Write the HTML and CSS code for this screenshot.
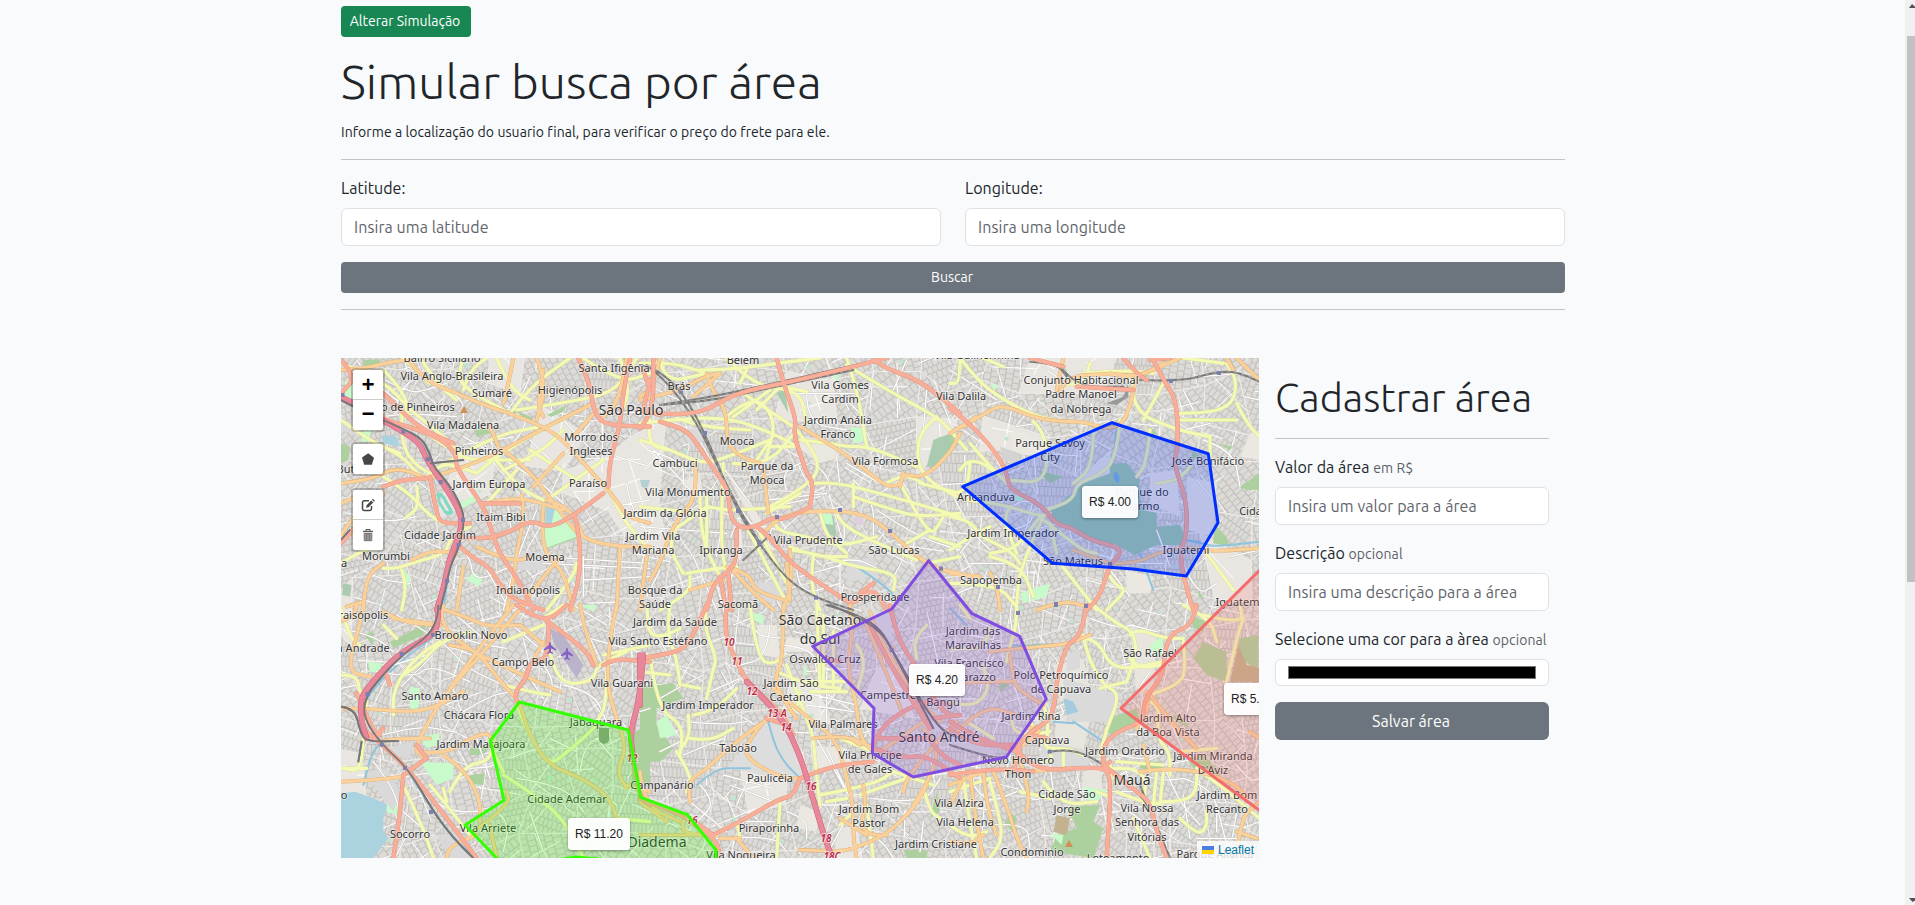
FILE: index.html
```html
<!DOCTYPE html>
<html lang="pt-BR">
<head>
<meta charset="utf-8">
<title>Simular busca por área</title>
<link rel="stylesheet" href="styles.css">
</head>
<body>
<div class="page">
<main class="container">
  <button class="btn btn-sm btn-success">Alterar Simulação</button>
  <h1 class="title">Simular busca por área</h1>
  <p class="lead">Informe a localização do usuario final, para verificar o preço do frete para ele.</p>
  <hr>
  <form class="search">
    <div class="search-row">
      <div class="field"><label>Latitude:</label><input class="control" placeholder="Insira uma latitude"></div>
      <div class="field"><label>Longitude:</label><input class="control" placeholder="Insira uma longitude"></div>
    </div>
    <button type="button" class="btn btn-sm btn-secondary">Buscar</button>
  </form>
  <hr>
  <div class="workspace">
    <section class="map">
      <svg class="canvas" width="918" height="500" viewBox="0 0 918 500">
        <g id="base"></g>
        <g id="roads"></g>
        <g class="markers">
          <g transform="translate(209,290)"><path d="M0-6c1 0 1 1 1 3l5 4v1.500l-5-2v3l2 1.500v1L0 5l-3 1v-1l2-1.500v-3l-5 2V1l5-4c0-2 0-3 1-3z"/></g>
          <g transform="translate(226,296)"><path d="M0-6c1 0 1 1 1 3l5 4v1.500l-5-2v3l2 1.500v1L0 5l-3 1v-1l2-1.500v-3l-5 2V1l5-4c0-2 0-3 1-3z"/></g>
          <path class="peak" d="M123 48l-4 7h8zM728 482l-4 7h8z"/>
          <path fill="#8b9a86" d="M258 370h10v13q-5 6-10 0z"/>
        </g>
        <g class="labels">
          <text x="101" y="4">Bairro Siciliano</text><text x="111" y="22">Vila Anglo-Brasileira</text><text x="151" y="39">Sumaré</text>
          <text x="229" y="36">Higienópolis</text><text x="273" y="14">Santa Ifigênia</text><text x="70" y="53">Alto de Pinheiros</text>
          <text x="122" y="71">Vila Madalena</text><text x="138" y="97">Pinheiros</text><text x="250" y="83">Morro dos</text><text x="250" y="97">Ingleses</text>
          <text x="148" y="130">Jardim Europa</text><text x="247" y="129">Paraíso</text><text x="16" y="115">Butantã</text><text x="160" y="163">Itaim Bibi</text>
          <text x="99" y="181">Cidade Jardim</text><text x="45" y="202">Morumbi</text><text x="204" y="203">Moema</text><text x="187" y="236">Indianópolis</text>
          <text x="3" y="209">a</text><text class="big" x="290" y="57">São Paulo</text>
          <text x="338" y="32">Brás</text><text x="402" y="6">Belém</text><text x="396" y="87">Mooca</text><text x="334" y="109">Cambuci</text>
          <text x="426" y="112">Parque da</text><text x="426" y="126">Mooca</text><text x="347" y="138">Vila Monumento</text><text x="324" y="159">Jardim da Glória</text>
          <text x="312" y="182">Jardim Vila</text><text x="312" y="196">Mariana</text><text x="380" y="196">Ipiranga</text><text x="467" y="186">Vila Prudente</text>
          <text x="499" y="31">Vila Gomes</text><text x="499" y="45">Cardim</text><text x="497" y="66">Jardim Anália</text><text x="497" y="80">Franco</text>
          <text x="544" y="107">Vila Formosa</text><text x="553" y="196">São Lucas</text><text x="534" y="243">Prosperidade</text>
          <text x="314" y="236">Bosque da</text><text x="314" y="250">Saúde</text><text x="397" y="250">Sacomã</text><text x="620" y="42">Vila Dalila</text>
          <text x="636" y="1">Vila Guilhermina</text><text x="740" y="26">Conjunto Habitacional</text><text x="740" y="40">Padre Manoel</text><text x="740" y="55">da Nobrega</text>
          <text x="709" y="89">Parque Savoy</text><text x="709" y="103">City</text><text x="867" y="107">José Bonifácio</text><text x="645" y="143">Aricanduva</text>
          <text x="801" y="138">Parque do</text><text x="801" y="152">Carmo</text><text x="672" y="179">Jardim Imperador</text><text x="732" y="207">São Mateus</text>
          <text x="845" y="196">Iguatemi</text><text x="650" y="226">Sapopemba</text><text x="916" y="157">Cidade</text><text x="898" y="248">Iguatemi</text>
          <text x="16" y="261">Paraisópolis</text><text x="16" y="294">Vila Andrade</text><text x="130" y="281">Brooklin Novo</text><text x="182" y="308">Campo Belo</text>
          <text x="94" y="342">Santo Amaro</text><text x="138" y="361">Chácara Flora</text><text x="140" y="390">Jardim Marajoara</text><text x="255" y="368">Jabaquara</text>
          <text x="226" y="445">Cidade Ademar</text><text x="147" y="474">Vila Arriete</text><text x="69" y="480">Socorro</text><text x="3" y="441">o</text>
          <text x="334" y="268">Jardim da Saúde</text><text x="317" y="287">Vila Santo Estéfano</text><text x="281" y="329">Vila Guarani</text>
          <text class="big" x="479" y="267">São Caetano</text><text class="big" x="479" y="286">do Sul</text><text x="484" y="305">Oswaldo Cruz</text>
          <text x="450" y="329">Jardim São</text><text x="450" y="343">Caetano</text><text x="367" y="351">Jardim Imperador</text><text x="502" y="370">Vila Palmares</text>
          <text x="397" y="394">Taboão</text><text x="429" y="424">Paulicéia</text><text x="321" y="431">Campanário</text><text x="529" y="401">Vila Príncipe</text><text x="529" y="415">de Gales</text>
          <text x="428" y="474">Piraporinha</text><text x="400" y="501">Vila Nogueira</text><text x="528" y="455">Jardim Bom</text><text x="528" y="469">Pastor</text>
          <text class="big" x="316" y="489">Diadema</text><text x="547" y="341">Campestre</text><text x="602" y="348">Bangú</text><text class="big" x="598" y="384">Santo André</text>
          <text x="632" y="277">Jardim das</text><text x="632" y="291">Maravilhas</text><text x="628" y="309">Vila Francisco</text><text x="628" y="323">Matarazzo</text>
          <text x="720" y="321">Polo Petroquímico</text><text x="720" y="335">de Capuava</text><text x="690" y="362">Jardim Rina</text><text x="706" y="386">Capuava</text>
          <text x="677" y="406">Novo Homero</text><text x="677" y="420">Thon</text><text x="784" y="397">Jardim Oratório</text><text class="big" x="791" y="427">Mauá</text>
          <text x="809" y="299">São Rafael</text><text x="827" y="364">Jardim Alto</text><text x="827" y="378">da Boa Vista</text><text x="872" y="402">Jardim Miranda</text><text x="872" y="416">D'Aviz</text>
          <text x="886" y="441">Jardim Bom</text><text x="886" y="455">Recanto</text><text x="726" y="440">Cidade São</text><text x="726" y="455">Jorge</text>
          <text x="806" y="454">Vila Nossa</text><text x="806" y="468">Senhora das</text><text x="806" y="483">Vitórias</text><text x="618" y="449">Vila Alzira</text>
          <text x="624" y="468">Vila Helena</text><text x="595" y="490">Jardim Cristiane</text><text x="691" y="498">Condominio</text><text x="777" y="504">Loteamento</text><text x="874" y="500">Parque Aliança</text>
        </g>
        <g class="exits">
          <text x="388" y="288">10</text><text x="396" y="307">11</text><text x="411" y="337">12</text><text x="436" y="359">13 A</text><text x="445" y="373">14</text>
          <text x="470" y="432">16</text><text x="485" y="484">18</text><text x="491" y="502">18C</text><text x="291" y="404">12</text><text x="351" y="466">16</text>
        </g>
        <g class="areas">
          <path class="area-blue" d="M621.700 128.700L771 64.700l96.300 31 9.700 69-31.700 53.300-53-7-80.600-5.700z"/>
          <path class="area-purple" d="M587.700 202.700l43 52.600 48 23 26.600 62.700-40 58-93 20-41-23.700 1.700-45-61.300-62 79-37.300z"/>
          <path class="area-green" d="M178.300 344l109 28 12.400 67.300 46.600 17.400L375 492v20l-140-13-70 11-41-43 39-24.700-13.700-59.600z"/>
          <path class="area-red" d="M930 201L780 350.300 930 461z"/>
        </g>
      </svg>
      <div class="tip tip-blue">R$ 4.00</div>
      <div class="tip tip-purple">R$ 4.20</div>
      <div class="tip tip-green">R$ 11.20</div>
      <div class="tip tip-red">R$ 5.00</div>
      <div class="controls">
        <div class="bar"><a class="zoom plus">+</a><a class="zoom minus">−</a></div>
        <div class="bar"><a><svg width="14" height="14" viewBox="0 0 14 14"><path fill="#464646" d="M7.200 1.200L13 5.800 10.800 12.700H3.200L1 5.500z"/></svg></a></div>
        <div class="bar bar-edit">
          <a><svg width="14" height="14" viewBox="0 0 14 14"><path fill="none" stroke="#464646" stroke-width="1.500" d="M8 2.800H3.200Q1.500 2.800 1.500 4.500v6.200q0 1.700 1.700 1.700h5.600q1.700 0 1.700-1.700V8"/><path fill="#464646" d="M5 9.800l.6-2.600L10.200 2.500l2 2L7.600 9.200zM11 1.700l.9-.9 2 2-.9.9z"/></svg></a>
          <a><svg width="14" height="15" viewBox="0 0 14 15"><path fill="none" stroke="#555" d="M5 3V1.500h4V3"/><path fill="#555" d="M2 2.800h10v1.400H2z"/><path fill="#999" stroke="#777" d="M3.200 5.500h7.600v7.200H3.200zM5.700 5.500v7M8.300 5.500v7"/></svg></a>
        </div>
      </div>
      <div class="credit"><svg width="12" height="8" viewBox="0 0 12 8"><path fill="#4c7be1" d="M0 0h12v4H0z"/><path fill="#ffd500" d="M0 4h12v4H0z"/></svg><span>Leaflet</span></div>
    </section>
    <aside class="side">
      <h2 class="subtitle">Cadastrar área</h2>
      <hr>
      <div class="field"><label>Valor da área <small>em R$</small></label><input class="control" placeholder="Insira um valor para a área"></div>
      <div class="field"><label>Descrição <small>opcional</small></label><input class="control" placeholder="Insira uma descrição para a área"></div>
      <div class="field"><label>Selecione uma cor para a àrea <small>opcional</small></label><div class="control color"><span class="swatch"></span></div></div>
      <button class="btn btn-secondary btn-save">Salvar área</button>
    </aside>
  </div>
</main>
<div class="scrollbar"><i class="arrow up"></i><i class="thumb"></i><i class="arrow down"></i></div>
</div>
<script src="map.js"></script>
</body>
</html>
```
FILE: styles.css
```css
*{box-sizing:border-box}
body{margin:0;background:#f8fafc;color:#212529;font:16px/24px Ubuntu,"Noto Sans",sans-serif;overflow:hidden}
.page{display:flex;height:905px;overflow:hidden}
.container{width:1224px;margin:0 auto 0 341px;padding-top:6px}
hr{margin:0;border:0;border-top:1px solid #c3c4c7}
.btn{display:block;border:0;border-radius:6px;color:#fff;font:16px/24px Ubuntu,"Noto Sans",sans-serif;padding:7px 13px 7px 11px;width:100%;height:38px}
.btn-sm{border-radius:4px;font-size:14px;line-height:21px;padding:5px 9px 5px 7px;height:31px}
.btn-success{background:#198754;width:130px;white-space:nowrap}
.btn-secondary{background:#6c757d}
.title{margin:15px 0 0;font-family:Ubuntu,"Open Sans",sans-serif;font-size:48px;line-height:58px;font-weight:300;white-space:nowrap;letter-spacing:.06px}
.lead{margin:12px 0 16px;font-size:14px;line-height:21px;letter-spacing:.07px}
.search{padding:16px 0}
.search-row{display:grid;grid-template-columns:1fr 1fr;gap:24px}
.field{display:flex;flex-direction:column;margin-bottom:16px}
label{display:block;height:24px;margin-bottom:8px;white-space:nowrap;letter-spacing:.04px}
label small{font-size:14px;line-height:1;color:#5c6167;letter-spacing:.1px}
.control{display:block;width:100%;height:38px;padding:6px 12px;border:1px solid #dee2e6;border-radius:6px;background:#fff;font:16px/24px Ubuntu,"Noto Sans",sans-serif;letter-spacing:.08px}
.control::placeholder{color:#5f656b;opacity:1}
.color{height:27px;padding:6px 12px}
.swatch{display:block;height:13px;background:#000;border:1px solid #777}
.workspace{display:flex;gap:16px;padding-top:48px}
.map{position:relative;width:918px;height:500px;overflow:hidden;font-family:"Liberation Sans",Arial,sans-serif;flex:none}
.canvas{display:block}
.side{width:274px;padding-top:16px}
.subtitle{margin:0 0 16px;font-family:Ubuntu,"Open Sans",sans-serif;font-weight:300;font-size:40px;line-height:48px;white-space:nowrap}
.side hr{margin-bottom:16px}
.labels text{font:11px "Noto Sans",sans-serif;fill:#333;text-anchor:middle;paint-order:stroke;stroke:rgba(255,255,255,.55);stroke-width:1.6px;stroke-linejoin:round}
.labels .big{font-size:14px}
.exits text{font:italic 600 10px "Noto Sans",sans-serif;fill:#b52b3d;text-anchor:middle;paint-order:stroke;stroke:rgba(255,255,255,.6);stroke-width:2px}
.markers{fill:#8461c4}
.peak{fill:#d08f55}
.areas path{stroke-width:3;stroke-linejoin:round;fill-opacity:.2}
.area-blue{stroke:#002eff;fill:#002eff}
.area-purple{stroke:#804de0;fill:#804de0}
.area-green{stroke:#33ff00;fill:#33ff00}
.area-red{stroke:#f56c6c;fill:#f56c6c}
.tip{position:absolute;padding:6px;border:1px solid #fff;border-radius:3px;background:rgba(255,255,255,.94);color:#222;font-size:12px;line-height:18px;box-shadow:0 1px 3px rgba(0,0,0,.4);white-space:nowrap}
.tip-blue{left:741px;top:128px}
.tip-purple{left:568px;top:306px}
.tip-green{left:227px;top:460px}
.tip-red{left:883px;top:325px}
.controls{position:absolute;left:10px;top:10px;display:flex;flex-direction:column;gap:10px}
.bar{width:34px;border:2px solid rgba(0,0,0,.2);border-radius:4px;background:#fff;background-clip:padding-box}
.bar-edit{margin-top:2px}
.bar a{display:flex;align-items:center;justify-content:center;height:30px;color:#000;border-bottom:1px solid #ccc}
.bar a:last-child{border-bottom:0}
.zoom{font:bold 22px/30px "Liberation Mono",monospace}
.bar .plus{padding-top:5px}
.bar .minus{padding-top:2px}
.credit{position:absolute;right:0;bottom:0;display:flex;align-items:center;gap:4px;padding:0 5px;height:17px;background:rgba(255,255,255,.8);color:#0078a8;font-size:12px}
.scrollbar{width:10px;background:#f0f0f0;position:relative;flex:none}
.arrow{position:absolute;left:4px;width:6px;height:4px;background:#505050}
.up{top:4px;clip-path:polygon(50% 0,100% 70%,100% 100%,0 100%)}
.down{bottom:3px;clip-path:polygon(0 0,100% 0,100% 60%,60% 100%)}
.thumb{position:absolute;left:2px;right:0;top:36px;height:546px;background:#c1c1c1}
```
FILE: map.js
```js
const NS = 'http://www.w3.org/2000/svg';
const add = (parent, tag, attrs) => {
  const node = document.createElementNS(NS, tag);
  for (const k in attrs) node.setAttribute(k, attrs[k]);
  parent.appendChild(node);
  return node;
};
let seed = 7;
const rnd = () => (seed = (seed * 16807) % 2147483647) / 2147483647;
const base = document.getElementById('base');
const roads = document.getElementById('roads');

// Residential street grid: jittered blocks, each with its own orientation.
add(base, 'rect', { width: 918, height: 500, fill: '#e9e6e1' });
const defs = add(base, 'defs', {});
for (let i = 0; i < 12; i++) {
  const w = 4 + rnd() * 3, h = 5 + rnd() * 5;
  const p = add(defs, 'pattern', { id: 'st' + i, width: w * 3, height: h * 2, patternUnits: 'userSpaceOnUse', patternTransform: `rotate(${i * 15 + rnd() * 9})` });
  add(p, 'rect', { width: 40, height: 40, fill: '#dddbd8' });
  add(p, 'path', { d: `M0 .5H40M0 ${h}H40M.5 0V${h}M${w} 0V${h}M${w * 2} 0V${h}M${w * .5} ${h}V40M${w * 1.6} ${h}V40M${w * 2.5} ${h}V40`, stroke: '#bab7b3', 'stroke-width': .8, fill: 'none' });
}
const S = 42, cols = 24, rows = 14, pt = [];
for (let r = 0; r < rows; r++) { pt[r] = []; for (let c = 0; c < cols; c++) pt[r][c] = [c * S - 20 + (rnd() - .5) * 32, r * S - 20 + (rnd() - .5) * 32]; }
for (let r = 0; r < rows - 1; r++) for (let c = 0; c < cols - 1; c++) {
  const q = [pt[r][c], pt[r][c + 1], pt[r + 1][c + 1], pt[r + 1][c]];
  if (rnd() > .06) add(base, 'path', { d: 'M' + q.join('L') + 'Z', fill: `url(#st${Math.floor(rnd() * 12)})`, stroke: '#efedea', 'stroke-width': 1 });
  const cx = q[0][0] + 20, cy = q[0][1] + 20, a = rnd() * 3.14;
  for (let k = 0; k < 2; k++) {
    const l = 10 + rnd() * 18, b = a + (k % 2) * 1.57, dx = Math.cos(b) * l, dy = Math.sin(b) * l, ox = (rnd() - .5) * 26, oy = (rnd() - .5) * 26;
    add(base, 'path', { d: `M${cx + ox - dx} ${cy + oy - dy}L${cx + ox + dx} ${cy + oy + dy}`, stroke: '#fff', 'stroke-width': 1 });
  }
  if (rnd() > .5) add(base, 'circle', { cx: cx + rnd() * 16, cy: cy + rnd() * 16, r: .8 + rnd() * 1.6, fill: '#bde8cd' });
}

// Tiles: origin in map pixels, geometry in third-of-a-pixel units.
const tiles = [
 { left: -11, top: -8,
  land: [['#add19e', 'M100 30L150 28 150 42 100 50ZM33 280L60 290 55 330 33 340ZM545 175L610 205 600 215 540 190ZM655 470L700 490 740 565 640 600ZM435 240L470 235 480 250 440 262ZM650 195L710 165 700 185 665 200Z'],
   ['#c8facc', 'M45 95L75 80 80 140 45 150ZM95 245L125 240 115 275 95 275ZM390 460L440 430 450 445 400 475ZM215 650L240 680 240 710 215 700ZM640 530L655 470 700 490 740 560 638 598ZM410 690L430 665 460 690 445 710Z'],
   ['#d9d9d9', 'M33 210L100 230 90 260 33 240ZM560 220L590 205 620 235 580 260ZM560 600L650 610 640 660 560 660Z'],
   ['#aad3df', 'M648 470L675 475 665 520 645 530ZM155 255L200 260 210 290 160 280Z'], ['#aacbaf', 'M40 700L65 705 60 740 36 735Z'], ['#7edac0', 'M320 430Q335 420 350 450L370 485Q365 500 345 492L325 460ZM333 437L328 450 348 483 358 484Z']],
  water: '33,150 110,180 220,240 290,290 310,350 380,450 402,510 385,580 360,640 340,780',
  w: '165,90 240,130 290,120 350,100|80,30 110,80 200,150|160,200 220,190 380,200|200,180 200,130 280,60|330,110 400,140 400,210|400,260 600,370 700,460|600,80 560,170|780,220 700,320 620,400|460,280 520,360 600,440|600,270 680,350 770,410|700,210 850,370|350,540 420,610 430,700 560,640|640,620 960,640|640,640 960,655|760,620 760,740|850,470 960,450|890,400 900,470 960,560|100,660 150,690 240,700|620,480 560,620 520,780|760,690 960,680|540,290 600,220 560,190|470,660 540,780|860,320 960,350|70,480 150,520 260,500',
  y: '33,40 160,90 240,180 330,250 380,300 400,330 600,330|160,60 230,130 230,210 350,290|160,290 220,320 260,370 290,385|219,24 250,50 300,100|400,120 420,60 470,24|500,24 520,70 560,130 600,150|540,190 600,110 720,24|560,180 760,150 860,120 920,24|760,24 870,100 960,70|440,370 520,300 760,175|330,350 480,260 630,230|490,320 560,410 640,450|520,360 630,310 700,240|600,300 740,390|650,450 820,330|470,460 560,360|160,380 240,430 290,490 340,520|300,370 220,330 215,180|260,410 270,470 230,500|420,530 360,560 350,610 260,635 200,655 160,655|215,660 230,700 215,780|33,640 80,610 140,590|33,210 130,280 210,310|400,24 380,80 420,125 530,185|830,400 870,500 960,600|650,780 730,680 740,640|270,24 330,110 380,150|870,24 900,110 880,170|290,385 330,330 440,370',
  o: '380,130 460,165 540,190 640,230 700,270 770,350 860,450 890,500 960,520|230,24 280,90 380,130|33,60 110,55 180,35 240,30|290,385 410,350 520,300 640,235 790,160|520,300 600,360 700,500 760,570 870,590 960,590|550,24 540,80 520,160|640,60 620,160 640,200|620,24 650,100 620,210|480,230 510,300|440,590 480,610 560,635 600,620|470,460 550,435 700,480|575,435 585,500 560,600 550,700 530,780|33,400 120,390 200,350 290,385|33,460 100,430 160,430|100,470 40,540 33,560|245,630 300,600 380,610|100,780 105,680 160,640|50,770 100,755|640,470 630,600 700,660 730,780|690,620 600,730 570,780|400,650 380,780|610,410 700,310|870,590 860,780|760,560 730,480 650,450|730,260 800,180|890,24 870,150 820,200',
  r: '75,130 150,180 160,210 240,230 330,265 380,310 375,350 470,480 500,600 560,680 610,780|33,30 80,80 33,130|160,130 220,190 280,240 370,280|300,380 320,500 340,520 420,520|160,410 210,390 290,385|370,560 460,570 540,545 600,510 660,535 740,490 820,430|570,460 460,460|745,24 780,100 790,180 820,225 960,230|900,24 880,120 870,230 840,330 835,410|380,580 420,620 480,650 530,740 640,780|735,500 750,560 750,680 720,780|33,580 80,530 90,500|940,60 960,120|960,90 940,180',
  m: '33,140 100,175 160,212 220,245 270,280 290,330 335,395 370,450 400,510 380,575 355,635 345,700 320,780',
  rail: '33,150 100,185 220,237 275,265 300,310 310,350 355,400 390,460 404,510 388,590 360,650 350,700 330,780|300,340 400,330|33,570 60,540',
  st: '220,245 293,328 332,396 399,510 386,585 351,693 37,135' },
 { left: 299, top: -8,
  land: [['#aacbaf', 'M880 270L945 245 940 290 880 350 860 350ZM410 130L435 115 445 190ZM545 490L580 500 590 560 555 550ZM375 705L440 700 420 720Z'],
   ['#c8facc', 'M630 230L670 235 670 275 640 280ZM575 70L600 70 590 100ZM545 490L575 492 580 525 550 520Z'],
   ['#ebe8e2', 'M240 330L340 470 380 540 340 520ZM470 290L490 260 560 270 600 320 540 340ZM120 400L180 370 190 450Z'], ['#dadada', 'M350 700L430 690 430 750 350 760ZM620 640L700 620 720 670 620 700ZM130 240L200 230 210 260 150 290Z'], ['#b5d0d0', 'M0 390L30 390 20 420 5 410Z'], ['#e0cfdf', 'M640 500L670 505 670 525 640 520Z']],
  water: '650,650 740,710 760,740',
  w: '0,90 120,160 180,150|20,300 130,330 130,400|40,300 160,430|500,130 500,220 620,240|440,130 650,130|600,130 680,210|700,60 690,180|770,100 780,180|800,30 760,120|220,360 300,480 400,600|240,340 330,460|520,340 560,370 570,420|590,320 600,410|640,390 700,440 700,560|380,450 560,430|400,470 540,440|600,500 620,540 600,600|560,640 640,620 720,660|470,640 470,740 600,700|480,680 620,640|300,500 300,630|0,530 260,550|20,740 60,660|160,620 230,780|620,340 720,400|860,120 850,240|600,740 600,630|740,260 720,360|440,420 420,370 500,330|240,560 230,620|710,480 830,560 960,600',
  y: '0,40 90,35 200,70|260,24 340,110 480,120 500,220|180,60 260,60 410,40 540,24|60,24 70,100 200,70|0,220 80,210 260,200 400,250 470,290|110,205 180,230 330,240|260,200 340,130 410,210 380,320|310,130 460,230|350,180 410,120|0,270 70,290 180,340 240,330 390,270|280,340 380,350 470,240|350,330 390,270|390,290 460,290|430,110 500,125|620,24 650,110 680,290|620,45 740,120 890,200 930,240|480,270 570,280 620,290 690,290 830,350|890,200 840,240 830,330 860,390 950,440|390,470 520,400 540,330 470,240|380,490 480,430|520,400 580,395 720,430 860,470 960,500|640,400 640,470|640,440 760,480 830,500 960,490|740,400 790,370 850,400|910,500 900,520 870,560 780,400|870,560 960,590|800,580 870,540|400,500 400,540 500,560 600,590 710,560|450,590 520,620 620,620|520,620 510,700 540,780|450,600 530,610 640,650 770,670 760,720|200,470 260,480 290,480 450,470|180,440 180,560 240,680|200,440 200,600|250,340 240,580 260,670|140,670 270,650 290,650|320,530 440,760|540,480 550,550 620,610|590,490 600,520 690,570 830,630|130,670 90,610 100,540 130,520 200,470|60,780 150,730 150,680|360,550 440,700|960,620 860,640|0,470 180,490|30,210 20,280 80,300|300,100 320,60|280,200 390,120|960,430 840,400',
  o: '200,70 210,110 260,180 260,280 300,320 360,340|120,120 190,80 240,70|480,230 600,300 690,370 740,410 780,405 790,370 850,385 930,310 960,250|370,360 385,490|380,540 420,490 600,480 690,500 750,545 830,620 900,660 960,670|165,340 175,440 100,520 60,640 30,690|260,650 330,670 340,720 430,750|270,650 330,720 400,780|60,24 40,110 0,140|0,150 120,120|450,600 460,690 430,780|150,720 250,690|160,140 240,70|790,370 780,410|20,620 0,780|440,640 450,750',
  r: '60,190 170,200 280,130 430,100 600,60 740,24|410,24 430,100 470,210 460,250 490,340 500,370 520,400 510,470|510,470 440,510 400,500 350,530 300,535 270,500 265,420 230,370 170,280 140,240 60,215|350,530 390,560 450,640 600,740 640,765 700,710 740,780|700,24 720,50 840,90 960,190|290,540 290,630 270,660 220,700 200,780|0,235 40,190 40,24|265,670 275,780|660,730 700,700|0,180 60,195|240,680 260,780',
  m: '', rail: '60,165 200,145 400,100 740,24|60,165 200,155 410,110 640,60|0,45 50,55 130,130 195,250 290,480 350,570 440,690 530,745 640,780|20,45 130,130 280,450 360,580|310,630 390,555', st: '123,125 195,249 294,483 411,501 357,578 600,480 750,543 528,743 903,656' },
 { left: 609, top: -8,
  land: [['#add19e', 'M870 410L928 370 928 420 890 420ZM790 520L830 560 840 590 790 580ZM740 720L760 740 750 745ZM0 240L15 260 0 310ZM600 230L620 250 600 265ZM260 360L340 380 300 400ZM730 300L750 320 720 330ZM800 280L850 290 840 300Z'],
   ['#ebe8e2', 'M900 250L928 240 928 330 870 320ZM190 240L290 280 280 320 180 310ZM600 370L680 360 690 500 600 460ZM710 380L800 400 790 560 715 540ZM530 660L610 680 600 730 530 730Z'],
   ['#a0cbab', 'M480 340L530 340 570 390 565 420 580 480 620 490 620 530 690 525 705 560 700 585 620 585 555 615 500 585 440 570 330 520 290 490 330 460 400 400 480 370Z'],
   ['#d5d3d1', 'M150 290L210 310 210 340 160 330Z'], ['#999', 'M535 100L535 140 500 165 470 160 520 140Z'], ['#c8facc', 'M200 430L225 435 240 460 190 450ZM120 100L150 110 130 120ZM210 730L300 700 290 740 220 760Z'], ['#7db5e0', 'M495 365Q510 370 508 395Q500 405 490 380Z']],
  water: '500,240 490,330|705,570 760,580 790,590 928,575|570,610 610,720',
  w: '0,60 80,110 140,150|60,200 100,280 140,320|200,230 260,220|180,480 210,440 300,480|180,540 240,530 250,480|560,60 630,70|520,640 640,640|480,660 540,740|700,640 740,740 800,700|600,260 590,310|360,240 440,290|400,60 490,140|760,270 850,300 870,410|700,240 780,220|750,80 880,70|840,620 928,600|0,420 60,540 120,600|60,640 160,640|230,640 240,760|740,390 800,460|30,610 70,560|290,60 350,100|700,120 740,200|620,540 660,650|880,140 928,150|0,740 140,680',
  y: '30,24 80,90 160,150 260,200 340,215|250,215 290,250 290,400 170,390|510,210 500,330 440,380 380,400 370,450 290,480|600,240 590,340 560,380|430,240 430,350 370,400|340,100 400,110 420,40|400,70 520,60 610,70|550,90 540,180 680,240 780,260|640,100 580,210|680,190 780,190 850,160 860,90 830,40|680,210 860,210|820,40 700,24|860,160 890,220 928,260|780,260 780,340|720,350 690,390 620,400|60,280 120,350 190,420|30,360 60,310 180,400|0,430 50,430 60,340|50,450 150,460 270,500 300,490|270,500 390,600 440,610|270,500 220,570 180,600 120,610|180,470 160,500 180,560 200,610|300,520 320,610|0,500 60,510 90,560 180,600 210,640|330,640 440,780|690,600 700,670|770,610 850,720|480,680 500,710 530,720 470,780|0,240 50,300|30,24 30,100 0,100|120,620 210,640 250,740|100,24 160,50|0,600 60,560 120,530|280,500 210,650 200,760|0,700 140,700 200,770',
  o: '40,230 120,180 160,165 260,205 340,215 400,215 480,240 530,210 560,80|330,130 340,80 480,70 570,80 640,40|0,250 80,200|340,24 320,120|490,640 560,640 620,610 700,590 780,605 928,595|0,670 90,680|260,780 340,750 410,770|690,24 610,60|860,24 928,90|850,60 830,24|120,670 140,700 150,780|480,640 370,600|480,70 540,80',
  r: '0,175 60,220 140,310 170,370 180,420 270,460 320,525 360,530 420,570 500,590 515,610 480,640 450,740 410,780|610,30 640,90 680,150 685,290 670,340 710,450 710,560 690,600 700,680 730,780|520,24 560,70 590,90|380,110 550,120|240,24 340,50|600,30 660,24',
  m: '', rail: '240,35 320,40 350,80|570,90 690,95 800,65 860,65 928,95|340,60 380,110 520,110', st: '663,93 807,69 480,642 144,711 318,762 408,768' },
 { left: -11, top: 247,
  land: [['#aad3df', 'M33 565L75 560 130 580 175 600 160 640 160 680 175 700 130 759 33 759Z'],
   ['#c8facc', 'M115 170L155 175 155 205 120 200ZM240 245L270 250 265 320 240 310ZM270 470L370 475 370 520 320 540ZM170 595L205 600 200 630 170 620ZM750 0L800 0 790 20ZM270 395L330 385 325 420 290 430Z'],
   ['#add19e', 'M180 110L290 55 280 90 190 130ZM100 90L130 80 130 120ZM420 510L465 505 460 540 415 535ZM905 390L960 350 960 540 905 545ZM420 430L480 420 460 450 420 450Z'],
   ['#bbb3cc', 'M660 70L700 90 760 180 740 220 700 160 670 110Z'], ['#d9d9d9', 'M160 430L250 410 240 460 180 450ZM100 500L170 490 210 560 190 620ZM320 690L390 680 440 759 360 759Z']],
  water: '320,90 230,150 110,270 98,330 150,410 230,490 310,620 380,710 440,759|160,410 130,430 110,500 100,540',
  w: '33,70 130,90 190,140|200,30 330,100 410,190 520,240|340,70 410,110 530,130|370,24 460,100|140,200 250,220 300,180 420,230|190,180 290,150|330,250 330,180|400,320 480,270 550,260|33,200 80,215|120,400 260,360 370,380|390,490 480,490 500,470|130,470 210,570 200,680|220,620 300,690|440,400 480,520|700,240 790,260 830,350|640,180 680,230 640,300|730,0 830,60|780,100 960,150|580,190 640,280|500,20 640,140|660,400 740,440|560,520 700,540 760,620|540,460 620,430|600,620 640,740|810,560 860,600|280,560 340,620 480,620|33,250 80,240|750,500 760,420 830,390|200,750 230,690|850,460 800,400|500,620 540,650 520,740',
  y: '220,210 270,180 330,110 420,80|110,290 100,400 90,500 40,490|33,490 110,490|220,540 280,670 310,759|300,540 350,600 420,690|360,560 400,480 480,470 490,400|350,590 340,550|520,510 600,560 700,640 760,759|560,300 600,400 660,480 700,450 760,400 800,360|520,240 600,260 660,270|640,60 520,110|660,140 680,240 790,230 800,180 890,140|700,0 640,40|33,210 80,210 90,260|830,200 830,300 800,350|200,100 160,60|520,500 490,440|860,640 960,650|33,10 60,100 90,120|820,150 960,120|330,110 260,150 190,250 190,330',
  o: '580,0 480,120 350,260 290,360 260,420 260,440|550,0 470,100 360,250|33,310 120,310 280,325 400,260|33,530 130,525 220,515|260,440 340,450 420,400 480,380 490,430|340,450 400,490 450,580 450,650|360,120 420,130 450,150 520,240 570,290 590,370 650,480 760,520 840,580 860,640|330,10 420,40 470,65 570,60|450,150 600,220 690,260|570,60 640,120|750,0 760,60 800,180|860,0 840,90 830,240 860,340 890,430 860,500 890,550|190,40 330,60|160,20 210,50 310,60|100,0 90,60 50,200 120,215|340,0 320,60 460,160|430,680 540,600 530,560|480,660 500,759|300,400 200,400 150,410|440,690 360,720 350,759|260,430 280,460|960,560 890,540|0,60 70,40 80,0|590,200 640,110',
  r: '560,0 600,30 660,45 710,0|655,50 660,160 600,170 590,220 555,260 560,290|640,40 720,100 770,140 790,180|220,510 290,460|220,510 210,630 190,759|230,490 290,560 380,680 440,759|820,180 850,160 960,170|900,370 910,470 930,580 960,600|80,265 130,380 150,390|110,380 180,440 230,490|130,400 160,370|160,190 180,240|290,460 260,420',
  m: '325,0 325,70 300,95 200,150 110,250 90,290 95,350 110,400|940,150 930,280 900,380 910,470',
  rail: '325,0 325,70 215,150 150,220 110,270 98,330 150,415 235,490 310,620 370,700 430,759|33,305 75,310 90,380 110,410 205,408|95,410 85,470', st: '309,90 215,147 113,267 155,419 225,489 303,621' },
 { left: 299, top: 247,
  land: [['#add19e', 'M0 245L100 235 130 280 50 310 0 280ZM0 280L50 300 50 360 100 430 60 470 0 470ZM790 735L860 735 860 759 800 759ZM890 560L900 620 870 640Z'],
   ['#c8facc', 'M50 350L80 330 110 390 60 400ZM490 180L510 200 490 215ZM320 20L370 30 370 60 330 40Z'],
   ['#dddddd', 'M260 490L370 350 440 350 480 420 500 520 400 520 330 500ZM840 300L900 320 910 380 850 380ZM600 130L640 200 620 260ZM660 0L750 30 760 110 700 60Z'], ['#ebe8e2', 'M350 60L410 60 420 160 360 150ZM440 100L520 110 520 140 430 140ZM510 420L620 430 640 490 520 490ZM480 600L540 620 530 680 470 670Z']],
  water: '385,350 400,410 430,470 480,520|170,540 230,490 290,490 330,490',
  w: '330,0 330,90 430,100|390,60 380,160 300,180|430,120 520,130 530,200|520,170 640,230|500,200 620,190|480,260 650,300|540,220 540,360|560,200 560,370|500,300 640,320|210,260 300,220|140,350 240,360 320,350|250,400 130,450|60,440 120,410|180,540 230,590 170,650|250,510 400,550|270,540 400,590|330,510 290,600|200,540 200,520|440,620 500,640 500,700|520,600 650,600|530,400 620,560|560,430 630,580|550,490 660,480|30,60 80,140|60,280 130,240 190,210|320,650 400,650|640,650 720,700 760,759|560,750 620,640|700,580 850,600 900,520|850,650 840,740|520,20 640,60|280,60 330,40|230,700 400,690 440,740|150,590 260,680|0,320 30,310|560,60 640,80 620,150|460,80 560,100',
  y: '90,0 80,80 110,160 120,240|200,0 190,60 230,160 220,190 200,280|30,150 50,310 130,360 120,450|330,0 350,160 400,180 430,150|410,200 500,240 600,250|530,0 540,240|550,30 550,240|580,80 580,240|130,240 180,250|160,330 220,320 290,250|150,400 210,410 280,370|110,440 160,520 140,560|120,435 150,400 145,330|540,570 700,540 760,500|520,400 530,520 540,600|440,180 500,340 520,400|510,260 620,260|560,590 620,580|230,690 290,640 300,700|410,759 420,590|0,200 90,210|600,400 700,440|600,660 640,620|490,230 640,230|850,550 870,620 900,640|120,70 30,120 20,0|650,120 680,160 650,260|860,60 820,100 830,160|450,320 480,300 480,260|880,540 760,500|660,570 800,520|700,759 680,600',
  o: '430,0 430,170 400,220 440,300 470,340|400,250 480,320 590,400 620,520 640,600 640,700 650,759|520,400 620,390 660,420|380,340 310,420 330,470 430,520 480,520|200,490 300,400 380,345|150,590 140,530 200,490|80,650 0,590|480,735 600,740 640,730 740,690 830,600 860,540|670,540 680,600 660,660 690,690 740,690|630,0 640,80 620,180 650,300 660,400 700,440|700,60 800,250 900,350|690,20 720,130 860,340|720,160 760,130|850,370 900,420 870,520 820,600|290,700 340,759|300,700 240,700|600,640 680,690|720,440 850,350|0,500 10,600 120,650|950,350 900,400 800,520 790,560|680,60 790,330|640,400 700,430|140,630 110,680 200,690|0,690 200,690',
  r: '260,0 250,80 290,170 320,230 430,330 460,390|0,160 110,145 150,110 200,0|480,520 530,500 600,480 700,470|480,520 460,575 420,580 300,650 220,690|560,160 600,170|700,420 720,360 860,280 930,300|700,430 780,460 860,450 960,520|750,0 770,100 840,200 890,300 930,330|150,650 230,700 240,759|690,60 760,200 870,370|0,580 150,640 220,690|720,400 860,400|880,340 960,330|860,390 900,450 960,480|380,340 440,360|740,160 850,330',
  m: '320,230 420,325 480,450 510,550 560,720 580,759|0,150 0,300', rail: '560,0 700,40 760,140 890,370 960,400|570,0 710,55 770,160 880,370', st: '755,135' },
 { left: 609, top: 247,
  land: [['#add19e', 'M480 340L560 310 570 350 480 390 465 370ZM415 320L500 290 490 340 440 330ZM720 30L770 50 760 80 730 70ZM760 110L830 140 830 230 770 210 730 160ZM870 100L925 90 925 200 860 150ZM350 605L450 600 430 650 460 670 430 759 300 740 320 690 380 670ZM570 470L630 470 640 500 570 490ZM710 460L760 450 810 500 800 530 730 490ZM660 330L700 340 720 370 680 350ZM180 620L200 640 190 680 165 660ZM150 230L180 240 150 260Z'],
   ['#e8e5df', 'M310 180L400 160 420 260 330 290ZM320 330L420 340 400 440 310 430ZM400 500L450 480 460 560 390 600ZM540 60L620 100 610 250 560 270Z'],
   ['#dadada', 'M340 220L510 270 480 350 350 350ZM280 410L440 440 400 500 260 480ZM0 370L140 440 130 450 0 430ZM350 150L390 130 390 190 350 200Z'],
   ['#c2b28f', 'M865 120L890 180 928 190 928 230 840 230ZM320 630L360 640 350 690 310 680Z'], ['#a2cbe0', 'M340 280L370 290 385 320 350 330Z'], ['#c8facc', 'M600 120L640 90 640 150 610 150ZM400 545L470 555 440 590 400 580ZM300 685L340 690 335 720Z']],
  water: '180,120 230,125 260,118 340,120|370,350 460,410|310,350 370,355|0,10 50,60|830,0 900,0',
  w: '200,30 210,90|300,170 290,230|210,340 350,340 330,300|540,60 620,80|600,200 560,260|480,440 560,470 640,440|500,480 620,530 700,520|650,500 680,580 750,660|860,480 900,530 928,520|60,520 100,600 200,560|200,520 240,600 300,560|110,660 230,650 240,730|380,500 400,600|490,590 620,670 640,740|660,580 660,740|700,570 720,700|850,560 928,600|740,700 860,700|30,30 130,70|0,140 120,120|700,520 800,550 800,680|300,480 310,560|20,600 150,620|140,60 90,260|0,240 60,220|470,560 560,560|180,30 190,100|420,40 500,70 550,60|800,600 840,759|60,90 160,110|560,660 600,759',
  y: '200,0 200,60 180,120 170,170|430,0 490,50 550,80 560,140 530,230|400,100 440,100 490,200 640,170|400,90 410,150 460,240 500,260 500,300 470,370 450,450|540,90 560,70 640,100 700,100|540,160 560,190 640,180|530,230 450,250|590,290 630,290 620,400 660,440 660,510|280,290 300,380 280,430 350,430 400,450|340,430 340,490|300,380 200,400 180,330|480,470 490,580 440,560|490,490 550,490 560,500|500,560 600,600 640,590|560,500 590,510 580,600|640,500 630,600|620,500 610,600|640,590 700,590 740,560 740,490|740,490 810,540 928,640|690,640 740,690 770,670 770,620|550,640 600,759|120,70 110,130 0,130|700,0 780,40 800,110|760,30 880,60 870,0|830,230 860,100 880,40|700,110 710,200 680,240 600,270|280,530 330,600 440,590|210,560 300,580|0,290 60,310 120,260 100,180|50,350 130,400|30,0 60,40|40,520 50,600 80,759|120,530 140,600 160,700 120,759|0,660 50,700 110,680|690,440 800,430|240,350 320,460 280,470|0,560 120,520|500,470 640,480',
  o: '120,140 260,125 350,118 420,90|180,150 190,240 230,270 280,300|0,240 60,230 190,230|60,500 70,600 100,759|0,600 40,520|100,500 110,600 140,690|130,500 170,600 200,700 230,759|570,500 640,490 760,500 860,540 890,580|900,380 928,400|580,420 600,500|600,270 680,370 740,430|200,430 240,560 230,620|0,710 60,720 100,690|860,759 870,640 928,590|590,260 600,300 560,370|0,540 100,500|230,500 350,490|920,700 860,680|230,370 290,360 220,420|20,380 100,300 200,330',
  r: '410,0 400,60 380,100 350,120 320,220 310,340 240,380 200,430|740,0 730,60 650,90 640,210 600,260 580,300 580,350 500,380 460,420 460,480|0,370 60,420 200,420|200,430 240,500 440,485 480,500 480,600 470,759|0,510 130,490 250,500|460,480 560,560 600,590 620,680 650,759|480,470 460,490|0,350 60,390 200,440|210,430 190,500|240,390 290,400',
  m: '', rail: '0,420 110,455 170,460|300,440 360,430 440,465 520,520 600,600 650,759|660,759 610,640 570,540', st: '299,440 204,24 318,0 408,3' }
];

const place = t => `translate(${t.left} ${t.top}) scale(.33333)`;
const lines = s => s.split('|').filter(Boolean).map(p => {
  const v = p.split(' ').map(a => a.split(',').map(Number));
  let d = `M${v[0]}`;
  for (let i = 1; i < v.length - 1; i++) d += `Q${v[i]} ${(v[i][0] + v[i + 1][0]) / 2},${(v[i][1] + v[i + 1][1]) / 2}`;
  return v.length > 1 ? d + `L${v[v.length - 1]}` : '';
}).join('');
const layer = (key, color, width, extra = {}) => tiles.forEach(t => {
  if (t[key]) add(roads, 'path', { d: lines(t[key]), transform: place(t), fill: 'none', stroke: color, 'stroke-width': width, 'stroke-linejoin': 'round', 'stroke-linecap': 'round', ...extra });
});
tiles.forEach(t => t.land.forEach(([fill, d]) => add(roads, 'path', { d, fill, transform: place(t) })));
layer('water', '#8fc5dc', 6);
layer('w', '#c4c0bb', 6);
layer('w', '#ffffff', 4);
layer('y', '#d3d8a0', 11.5);
layer('y', '#f4f9b4', 9.5);
layer('o', '#d8aa70', 11.5);
layer('o', '#fbd19b', 9.5);
layer('rail', '#777777', 6);
layer('rail', '#bbbbbb', 2, { 'stroke-dasharray': '10 12', 'stroke-linecap': 'butt' });
layer('r', '#e08f78', 13);
layer('r', '#f8ae98', 11);
layer('m', '#d2607c', 17);
layer('m', '#e78799', 14);
tiles.forEach(t => {
  if (t.m) add(roads, 'path', { d: lines(t.rail), transform: place(t), fill: 'none', stroke: '#77777a', 'stroke-width': 5 });
  t.st.split(' ').forEach(s => { const [x, y] = s.split(',').map(Number); add(roads, 'rect', { x: t.left + x / 3 - 2, y: t.top + y / 3 - 2, width: 4, height: 4, fill: '#7981b0' }); });
});
```
